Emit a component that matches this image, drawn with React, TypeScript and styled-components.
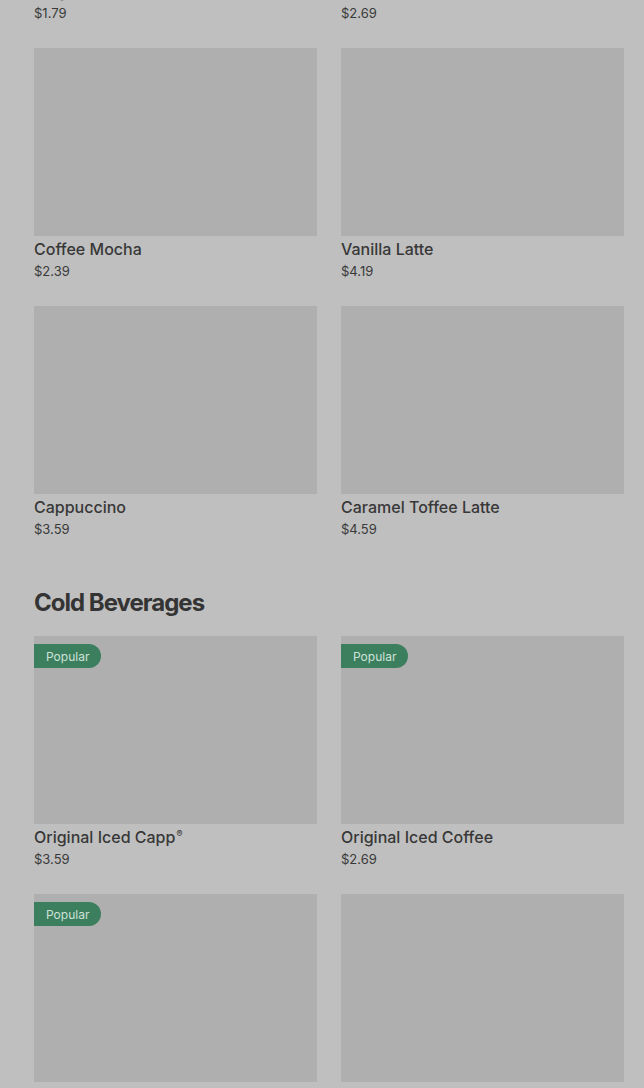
import { ReactElement } from 'react';
import styled, { createGlobalStyle } from 'styled-components';

type Item = { name: string; price: string; popular?: boolean; registered?: boolean };

const hotItems: Item[] = [
  { name: 'Original Blend', price: '$1.79' },
  { name: 'Latte', price: '$2.69' },
  { name: 'Coffee Mocha', price: '$2.39' },
  { name: 'Vanilla Latte', price: '$4.19' },
  { name: 'Cappuccino', price: '$3.59' },
  { name: 'Caramel Toffee Latte', price: '$4.59' },
];

const coldItems: Item[] = [
  { name: 'Original Iced Capp', price: '$3.59', popular: true, registered: true },
  { name: 'Original Iced Coffee', price: '$2.69', popular: true },
  { name: 'Iced Capp Supreme', price: '$3.99', popular: true },
  { name: 'Iced Latte', price: '$3.79' },
];

const MenuCard = ({ item }: { item: Item }): ReactElement => (
  <Card>
    <Thumb>{item.popular && <Badge>Popular</Badge>}</Thumb>
    <Name>
      {item.name}
      {item.registered && <Mark>®</Mark>}
    </Name>
    <Price>{item.price}</Price>
  </Card>
);

const App = (): ReactElement => (
  <>
    <GlobalStyle />
    <Page>
      <Section>
        <Grid>
          {hotItems.map((item) => (
            <MenuCard key={item.name} item={item} />
          ))}
        </Grid>
      </Section>
      <Section>
        <Heading>Cold Beverages</Heading>
        <Grid>
          {coldItems.map((item) => (
            <MenuCard key={item.name} item={item} />
          ))}
        </Grid>
      </Section>
    </Page>
  </>
);

const GlobalStyle = createGlobalStyle`
  html, body {
    margin: 0;
    padding: 0;
    background: #bfbfbf;
    overflow: hidden;
  }
  body {
    font-family: Inter, 'Liberation Sans', sans-serif;
    color: #333333;
  }
`;

const Page = styled.div`
  height: 1088px;
  overflow: hidden;
  padding: 0 20px 0 34px;
  box-sizing: border-box;
`;

const Section = styled.section`
  &:first-child {
    margin-top: -210px;
  }
  & + & {
    margin-top: 48px;
  }
`;

const Heading = styled.h2`
  margin: 0 0 18px;
  font-size: 24px;
  line-height: 30px;
  font-weight: 700;
  letter-spacing: -1px;
  color: #343434;
`;

const Grid = styled.div`
  display: grid;
  grid-template-columns: 283px 283px;
  column-gap: 24px;
  row-gap: 24px;
`;

const Card = styled.div`
  display: flex;
  flex-direction: column;
`;

const Thumb = styled.div`
  position: relative;
  height: 188px;
  background: #afafaf;
`;

const Badge = styled.span`
  position: absolute;
  top: 8px;
  left: 0;
  height: 24px;
  padding: 0 12px;
  display: flex;
  align-items: center;
  background: #3c7f5f;
  color: #cfe2d8;
  font-size: 12px;
  border-radius: 0 12px 12px 0;
`;

const Name = styled.div`
  margin-top: 1px;
  font-size: 16px;
  line-height: 24px;
  font-weight: 500;
  color: #383838;
`;

const Mark = styled.sup`
  font-size: 9px;
  line-height: 0;
  margin-left: 1px;
  vertical-align: 6px;
`;

const Price = styled.div`
  font-size: 13px;
  line-height: 21px;
  color: #3a3a3a;
`;

export default App;
